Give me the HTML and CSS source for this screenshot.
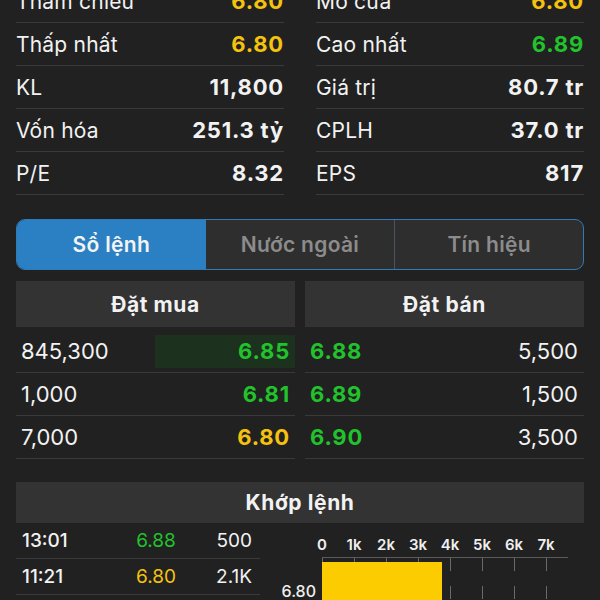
FILE: index.html
```html
<!DOCTYPE html>
<html lang="vi">
<head>
<meta charset="utf-8">
<link rel="stylesheet" href="styles.css">
</head>
<body>
<div class="page">
  <section class="stats">
    <div class="stat-col">
      <div class="stat"><span class="lbl">Tham chiếu</span><span class="val yellow">6.80</span></div>
      <div class="stat"><span class="lbl">Thấp nhất</span><span class="val yellow">6.80</span></div>
      <div class="stat"><span class="lbl">KL</span><span class="val">11,800</span></div>
      <div class="stat"><span class="lbl">Vốn hóa</span><span class="val">251.3 tỷ</span></div>
      <div class="stat"><span class="lbl">P/E</span><span class="val">8.32</span></div>
    </div>
    <div class="stat-col">
      <div class="stat"><span class="lbl">Mở cửa</span><span class="val yellow">6.80</span></div>
      <div class="stat"><span class="lbl">Cao nhất</span><span class="val green">6.89</span></div>
      <div class="stat"><span class="lbl">Giá trị</span><span class="val">80.7 tr</span></div>
      <div class="stat"><span class="lbl">CPLH</span><span class="val">37.0 tr</span></div>
      <div class="stat"><span class="lbl">EPS</span><span class="val">817</span></div>
    </div>
  </section>

  <nav class="tabs">
    <div class="tab active">Sổ lệnh</div>
    <div class="tab">Nước ngoài</div>
    <div class="tab last">Tín hiệu</div>
  </nav>

  <section class="book">
    <div class="book-side">
      <div class="book-head">Đặt mua</div>
      <div class="book-row bid"><span class="qty">845,300</span><span class="px green depth" style="width:140px">6.85</span></div>
      <div class="book-row bid"><span class="qty">1,000</span><span class="px green">6.81</span></div>
      <div class="book-row bid"><span class="qty">7,000</span><span class="px yellow">6.80</span></div>
    </div>
    <div class="book-side">
      <div class="book-head">Đặt bán</div>
      <div class="book-row ask"><span class="px green">6.88</span><span class="qty">5,500</span></div>
      <div class="book-row ask"><span class="px green">6.89</span><span class="qty">1,500</span></div>
      <div class="book-row ask"><span class="px green">6.90</span><span class="qty">3,500</span></div>
    </div>
  </section>

  <section class="match">
    <div class="match-head">Khớp lệnh</div>
    <div class="match-body">
      <div class="trades">
        <div class="trade"><span class="t">13:01</span><span class="tp green">6.88</span><span class="tv">500</span></div>
        <div class="trade"><span class="t">11:21</span><span class="tp yellow">6.80</span><span class="tv">2.1K</span></div>
      </div>
      <svg class="chart" width="324" height="77" viewBox="0 0 324 77">
        <g class="ax-labels">
          <text x="62" y="27">0</text>
          <text x="94" y="27">1k</text>
          <text x="126" y="27">2k</text>
          <text x="158" y="27">3k</text>
          <text x="190" y="27">4k</text>
          <text x="222" y="27">5k</text>
          <text x="254" y="27">6k</text>
          <text x="286" y="27">7k</text>
        </g>
        <line class="axis" x1="62" y1="34.5" x2="308" y2="34.5"/>
        <g class="ticks">
          <line x1="62.5" y1="35" x2="62.5" y2="77"/>
          <line x1="94.5" y1="35" x2="94.5" y2="77"/>
          <line x1="126.5" y1="35" x2="126.5" y2="77"/>
          <line x1="158.5" y1="35" x2="158.5" y2="77"/>
          <line x1="190.5" y1="35" x2="190.5" y2="77"/>
          <line x1="222.5" y1="35" x2="222.5" y2="77"/>
          <line x1="254.5" y1="35" x2="254.5" y2="77"/>
          <line x1="286.5" y1="35" x2="286.5" y2="77"/>
        </g>
        <rect class="bar" x="62" y="39" width="120" height="40"/>
        <text class="ylabel" x="56" y="74">6.80</text>
      </svg>
    </div>
  </section>
</div>
</body>
</html>
```

FILE: styles.css
```css
html, body {
  margin: 0;
  padding: 0;
  background: #212121;
  color: #f2f2f2;
  font-family: "Inter", "Noto Sans", "Liberation Sans", sans-serif;
  overflow: hidden;
}
.page {
  padding: 0 16px;
  width: 568px;
}
.yellow { color: #f4c20f; }
.green { color: #22c22c; }

.stats {
  margin-top: -20px;
  display: grid;
  grid-template-columns: 1fr 1fr;
  column-gap: 32px;
}
.stat {
  height: 42px;
  border-bottom: 1px solid #3a3a3a;
  display: flex;
  justify-content: space-between;
  align-items: center;
}
.stat .lbl { font-size: 21px; font-weight: 400; letter-spacing: 0.2px; }
.stat .val { font-size: 22px; font-weight: 700; letter-spacing: 0.8px; }

.tabs {
  margin-top: 24px;
  height: 49px;
  border: 1px solid #2e7bb8;
  border-radius: 9px;
  overflow: hidden;
  display: grid;
  grid-template-columns: 1fr 1fr 1fr;
  background: #2e2e2e;
}
.tab {
  display: flex;
  align-items: center;
  justify-content: center;
  font-size: 21px;
  font-weight: 600;
  letter-spacing: 0.3px;
  color: #8c8c8c;
}
.tab.active {
  background: #2b80c3;
  color: #f4f4f4;
}
.tab.last {
  border-left: 1px solid #4a5560;
}

.book {
  margin-top: 11px;
  display: grid;
  grid-template-columns: 1fr 1fr;
  column-gap: 10px;
}
.book-head {
  height: 46px;
  background: #333333;
  display: flex;
  align-items: center;
  justify-content: center;
  font-size: 21px;
  font-weight: 700;
  letter-spacing: 0.6px;
  margin-bottom: 3px;
}
.book-row {
  height: 42px;
  border-bottom: 1px solid #3a3a3a;
  display: flex;
  align-items: center;
  justify-content: space-between;
  font-size: 22px;
}
.book-row .qty { font-weight: 400; }
.book-row .px { font-weight: 700; letter-spacing: 0.8px; }
.book-row.bid { padding-left: 5px; }
.book-row.bid .px {
  height: 33px;
  display: flex;
  align-items: center;
  justify-content: flex-end;
  padding-right: 5px;
  box-sizing: border-box;
}
.book-row .depth { background: #1c311e; }
.book-row.ask { padding: 0 6px 0 5px; }

.match {
  margin-top: 23px;
}
.match-head {
  height: 41px;
  background: #333333;
  display: flex;
  align-items: center;
  justify-content: center;
  font-size: 21px;
  font-weight: 700;
  letter-spacing: 0.6px;
}
.match-body {
  display: grid;
  grid-template-columns: 244px 1fr;
}
.trade {
  height: 35px;
  border-bottom: 1px solid #3a3a3a;
  padding: 0 8px 0 6px;
  display: grid;
  grid-template-columns: 100px 68px 1fr;
  align-items: center;
  font-size: 19px;
}
.trade .t { font-weight: 500; }
.trade .tp { text-align: center; }
.trade .tv { text-align: right; }

.chart { display: block; }
.ax-labels text {
  fill: #f0f0f0;
  font-size: 15px;
  font-weight: 600;
  text-anchor: middle;
  font-family: "Inter", "Noto Sans", sans-serif;
}
.axis { stroke: #5a5a5a; stroke-width: 1; }
.ticks line { stroke: #6a6a6a; stroke-width: 1; stroke-dasharray: 13 15; }
.bar { fill: #fccb00; }
.ylabel {
  fill: #f0f0f0;
  font-size: 16px;
  font-weight: 500;
  text-anchor: end;
  font-family: "Inter", "Noto Sans", sans-serif;
}
```
